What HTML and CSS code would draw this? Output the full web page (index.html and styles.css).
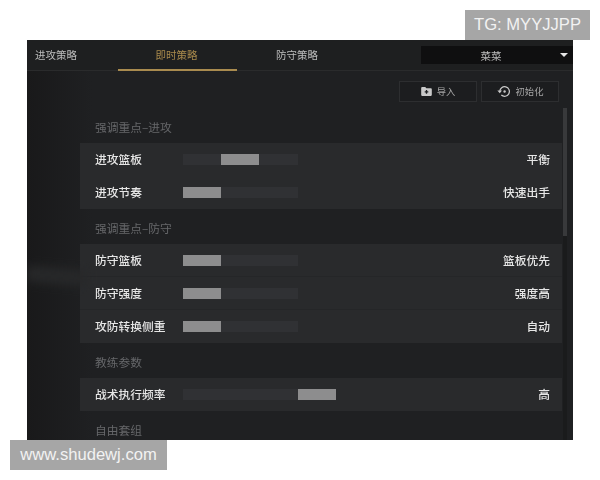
FILE: index.html
```html
<!DOCTYPE html>
<html lang="zh-CN">
<head>
    <meta charset="UTF-8">
    <meta name="viewport" content="width=device-width, initial-scale=1.0">
    <title>即时策略</title>
    <link rel="stylesheet" href="styles.css">
</head>
<body>
    <div class="mark-row">
        <div class="mark mark-top">TG: MYYJJPP</div>
    </div>
    <div class="screen">
        <div class="smear"></div>
        <div class="topbar">
            <div class="tab tab-first">进攻策略</div>
            <div class="tab tab-active">即时策略</div>
            <div class="tab tab-last">防守策略</div>
            <div class="dropdown">
                <span class="dropdown-name">菜菜</span>
                <span class="dropdown-arrow"></span>
            </div>
        </div>
        <div class="toolbar">
            <button class="tool-btn">
                <svg class="tool-icon" width="11" height="9" viewBox="0 0 13 11">
                    <path d="M0 1.5C0 .7.6 0 1.4 0H5l1.3 1.6h5.3c.8 0 1.4.6 1.4 1.4v6.5c0 .8-.6 1.5-1.4 1.5H1.400C.6 11 0 10.300 0 9.500Z" fill="#c9c9c9"/>
                    <path d="M6.500 3.800v4.400M4.300 6h4.400" stroke="#1d1e20" stroke-width="1.600"/>
                </svg>
                <span class="tool-text">导入</span>
            </button>
            <button class="tool-btn">
                <svg class="tool-icon" width="14" height="13" viewBox="0 0 14 13">
                    <path d="M2.800 6.500a4.800 4.800 0 1 1 1.500 3.500" fill="none" stroke="#c9c9c9" stroke-width="1.200"/>
                    <path d="M0.400 5.600h4.600L2.800 8.200Z" fill="#c9c9c9"/>
                    <circle cx="7.600" cy="6.500" r="1.200" fill="#c9c9c9"/>
                </svg>
                <span class="tool-text">初始化</span>
            </button>
        </div>
        <div class="content">
            <div class="list">
                <div class="group-title">强调重点–进攻</div>
                <div class="row">
                    <div class="row-label">进攻篮板</div>
                    <div class="slider slider-mid"><div class="thumb"></div></div>
                    <div class="row-value">平衡</div>
                </div>
                <div class="row">
                    <div class="row-label">进攻节奏</div>
                    <div class="slider"><div class="thumb"></div></div>
                    <div class="row-value">快速出手</div>
                </div>

                <div class="group-title">强调重点–防守</div>
                <div class="row row-line">
                    <div class="row-label">防守篮板</div>
                    <div class="slider"><div class="thumb"></div></div>
                    <div class="row-value">篮板优先</div>
                </div>
                <div class="row row-line">
                    <div class="row-label">防守强度</div>
                    <div class="slider"><div class="thumb"></div></div>
                    <div class="row-value">强度高</div>
                </div>
                <div class="row">
                    <div class="row-label">攻防转换侧重</div>
                    <div class="slider"><div class="thumb"></div></div>
                    <div class="row-value">自动</div>
                </div>

                <div class="group-title">教练参数</div>
                <div class="row">
                    <div class="row-label">战术执行频率</div>
                    <div class="slider slider-high"><div class="thumb"></div></div>
                    <div class="row-value">高</div>
                </div>

                <div class="group-title">自由套组</div>
            </div>
            <div class="scrollbar"><div class="scroll-thumb"></div></div>
        </div>
    </div>
    <div class="mark mark-bottom">www.shudewj.com</div>
</body>
</html>
```

FILE: styles.css
```css
body {
    margin: 0;
    background: white;
    font-family: "Noto Sans CJK SC", "Liberation Sans", sans-serif;
}
.mark-row {
    display: flex;
    justify-content: flex-end;
    padding: 10px 10px 0 0;
}
.mark {
    height: 30px;
    line-height: 30px;
    background: #a6a6a6;
    color: #f2f2f2;
    font-family: "Liberation Sans", sans-serif;
    font-size: 16.6px;
    text-align: center;
}
.mark-top {
    width: 125px;
}
.mark-bottom {
    width: 157px;
    margin-left: 10px;
}
.screen {
    position: relative;
    width: 546px;
    height: 400px;
    margin-left: 27px;
    background: linear-gradient(90deg, #19191a, #1f2022 12%);
    overflow: hidden;
    filter: blur(0.4px);
}
/* faint light streak behind the list */
.smear {
    position: absolute;
    left: 0;
    top: 228px;
    width: 60px;
    height: 16px;
    background: #272829;
    filter: blur(5px);
    transform: rotate(5deg);
}
.topbar {
    position: relative;
    display: flex;
    height: 30px;
    border-bottom: 1px solid #2a2b2c;
    background: #1e1f20;
    font-size: 10.5px;
    color: #bdbdbd;
}
.tab {
    line-height: 30px;
    text-align: center;
}
.tab-first {
    width: 91px;
    padding-left: 8px;
    box-sizing: border-box;
    text-align: left;
}
.tab-active {
    width: 119px;
    height: 31px;
    padding-right: 2px;
    box-sizing: border-box;
    color: #a98a4c;
    border-bottom: 2px solid #a98b4f;
}
.tab-last {
    width: 120px;
}
.dropdown {
    display: flex;
    align-items: center;
    justify-content: center;
    position: relative;
    width: 152px;
    height: 18px;
    margin: 6px 0 0 auto;
    background: #0f0f10;
}
.dropdown-name {
    margin-right: 12px;
}
.dropdown-arrow {
    position: absolute;
    right: 5px;
    top: 7px;
    border-left: 4px solid transparent;
    border-right: 4px solid transparent;
    border-top: 4px solid #e6e6e6;
}
.toolbar {
    display: flex;
    justify-content: flex-end;
    gap: 4px;
    padding: 10px 14px 6px 0;
}
.tool-btn {
    display: flex;
    align-items: center;
    justify-content: center;
    gap: 5px;
    width: 78px;
    height: 21px;
    padding: 0;
    border: 1px solid #2d2e30;
    background: #1c1d1f;
    color: #a5a5a5;
    font-family: inherit;
    font-size: 9.3px;
}
.tool-text {
    padding-bottom: 2px;
}
.content {
    display: flex;
    padding-left: 53px;
}
.list {
    width: 482px;
    height: 332px;
    overflow: hidden;
}
.group-title {
    height: 35px;
    padding-left: 15px;
    line-height: 38px;
    font-size: 11.75px;
    color: #66676a;
}
.row {
    display: flex;
    align-items: center;
    height: 33px;
    padding: 0 12px 0 15px;
    background: #292a2c;
    color: #e6e6e6;
    font-size: 11.75px;
    font-weight: 500;
}
.row-line {
    box-sizing: border-box;
    border-bottom: 1px solid #252628;
}
.row-label {
    width: 88px;
    padding-bottom: 2px;
}
.slider {
    display: flex;
    width: 115px;
    height: 11px;
    background: #303134;
}
.slider-mid {
    padding-left: 38px;
    width: 77px;
}
.slider-high {
    padding-left: 115px;
    width: 38px;
    background: linear-gradient(90deg, #303134 115px, #292a2c 115px);
}
.thumb {
    width: 38px;
    height: 11px;
    background: #8d8d8e;
}
.row-value {
    margin-left: auto;
    padding-bottom: 2px;
}
.scrollbar {
    width: 4px;
    height: 332px;
    margin-left: 1px;
    background: #1a1b1c;
}
.scroll-thumb {
    height: 128px;
    background: #38393b;
}
```
